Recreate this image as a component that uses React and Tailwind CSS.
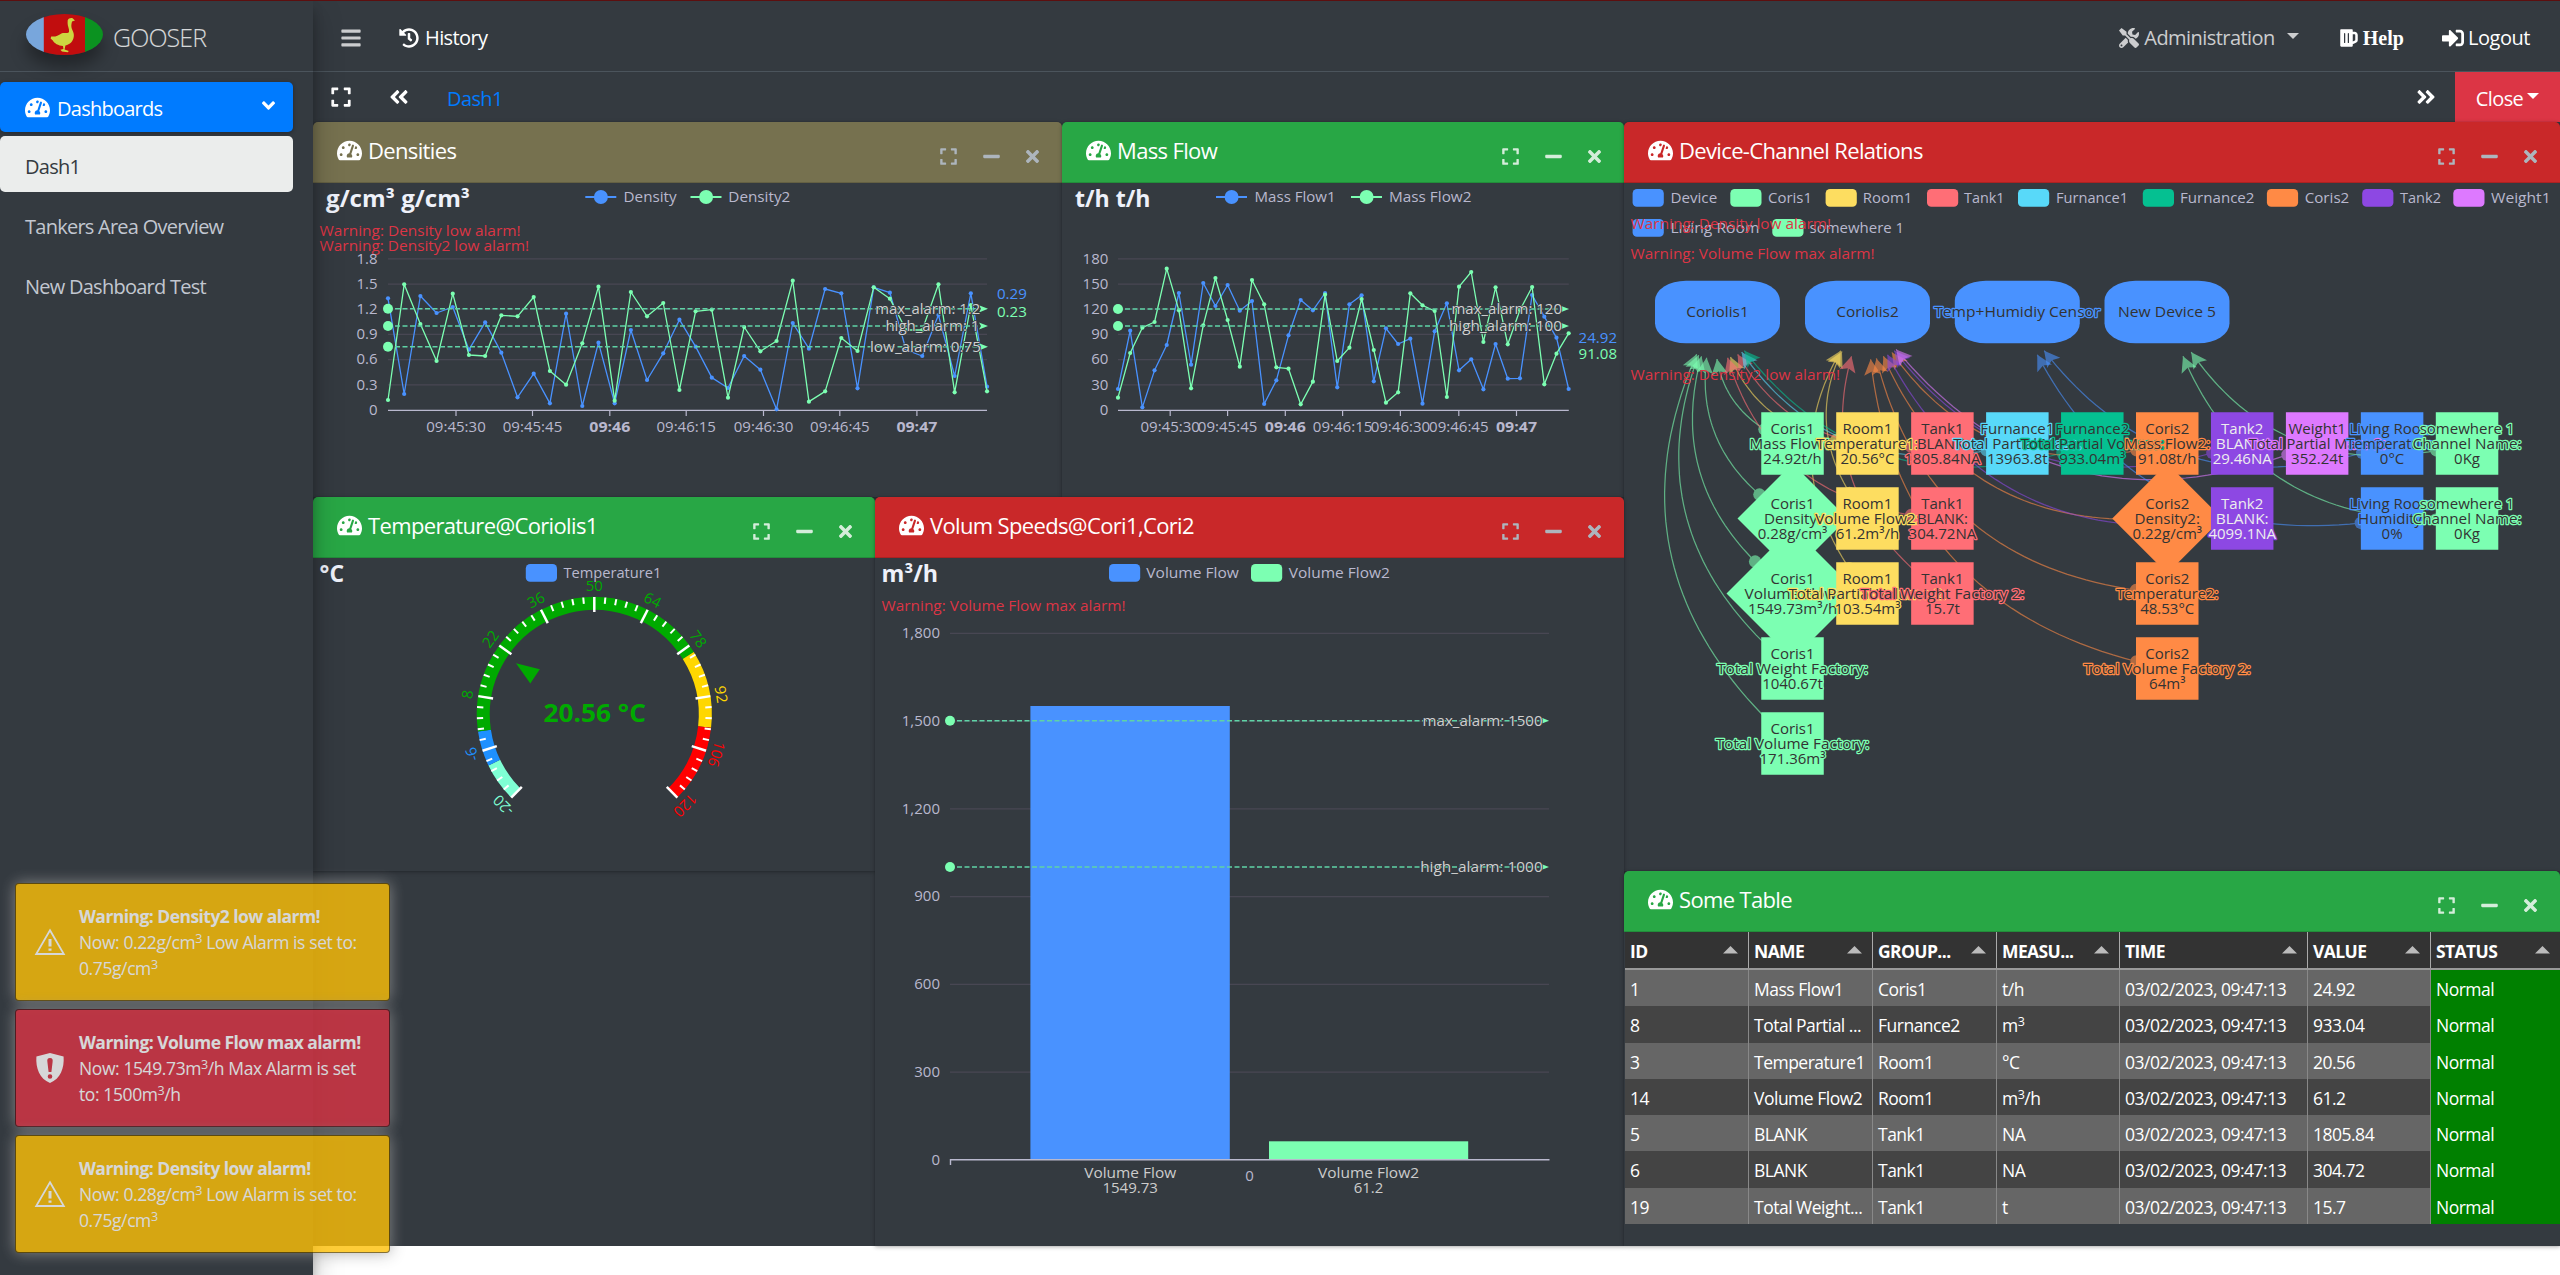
import React from "react";
import {
  FaTachometerAlt, FaHistory, FaTools, FaBeer, FaSignInAlt, FaExpand,
  FaAngleDoubleLeft, FaAngleDoubleRight, FaBars, FaMinus, FaTimes, FaAngleDown,
} from "react-icons/fa";

const MUTED = "#b9b8ce";
const BLUE = "#4992ff";
const GREEN = "#7cffb2";
const GRID = "#484753";

/* ---------- SVG helpers ---------- */

function T({ x, y, w, s = 15, fill = MUTED, bold, anchor = "start", rotate, stroke, sw = 2.5, children }) {
  return (
    <text
      x={x}
      y={y + s * 0.36}
      fontSize={s}
      fill={fill}
      fontWeight={bold ? 700 : 400}
      textAnchor={anchor}
      textLength={w}
      lengthAdjust="spacingAndGlyphs"
      stroke={stroke}
      strokeWidth={stroke ? sw : undefined}
      strokeLinejoin="round"
      paintOrder="stroke"
      transform={rotate ? `rotate(${rotate} ${x} ${y})` : undefined}
    >
      {children}
    </text>
  );
}

function Chart({ box, children }) {
  return (
    <svg
      viewBox={box.join(" ")}
      width={box[2]}
      height={box[3]}
      className="block font-['Open_Sans','Noto_Sans',sans-serif]"
    >
      {children}
    </svg>
  );
}

function LineKey({ x, y, tx, w, color, children }) {
  return (
    <g>
      <line x1={x} x2={x + 31} y1={y} y2={y} stroke={color} strokeWidth="2.2" />
      <circle cx={x + 15.6} cy={y} r="7" fill={color} />
      <T x={tx} y={y - 0.8} w={w}>{children}</T>
    </g>
  );
}

function BoxKey({ x, y, tx, w, color, children }) {
  return (
    <g>
      <rect x={x} y={y - 9} width="31.2" height="17.8" rx="4.4" fill={color} />
      <T x={tx} y={y} w={w}>{children}</T>
    </g>
  );
}

function MarkLine({ x1, x2, y, tx, w, children }) {
  return (
    <g>
      <line x1={x1 + 7} x2={x2 - 9} y1={y} y2={y} stroke="#5fd3a6" strokeWidth="1.5" strokeDasharray="5 2.5" />
      <circle cx={x1} cy={y} r="5" fill={GREEN} />
      <path d={`M${x2} ${y}l-9 -3.6l2 3.6l-2 3.6z`} fill={GREEN} />
      <T x={tx} y={y - 0.6} w={w} fill="#d0d0d0" stroke="#343a40" sw={1.6}>{children}</T>
    </g>
  );
}

function Series({ x0, step, ys, base, color }) {
  const pts = ys.map((v, i) => [x0 + i * step, v / 3 + base]);
  return (
    <g>
      <polyline points={pts.map((p) => p.join(",")).join(" ")} fill="none" stroke={color} strokeWidth="1.3" strokeLinejoin="bevel" />
      {pts.map((p, i) => <circle key={i} cx={p[0]} cy={p[1]} r="2.1" fill={color} />)}
    </g>
  );
}

function Axes({ x1, x2, labelX, rows, ticks, times }) {
  return (
    <g>
      {rows.map(([label, y], i) => (
        <g key={label}>
          {i < rows.length - 1 && <line x1={x1} x2={x2} y1={y} y2={y} stroke={GRID} strokeWidth="1.25" />}
          <T x={labelX} y={y - 0.6} anchor="end">{label}</T>
        </g>
      ))}
      <line x1={x1} x2={x2} y1="410.4" y2="410.4" stroke={MUTED} strokeWidth="1.3" />
      {ticks.map((x, i) => (
        <g key={x}>
          <line x1={x} x2={x} y1="410" y2="416" stroke={MUTED} strokeWidth="1.2" />
          <T x={x} y={426.5} anchor="middle" w={times[i].length > 5 ? 59.5 : 41} bold={times[i].length <= 5}>{times[i]}</T>
        </g>
      ))}
    </g>
  );
}

/* ---------- Charts ---------- */

const TIMES = ["09:45:30", "09:45:45", "09:46", "09:46:15", "09:46:30", "09:46:45", "09:47"];
const yRows = (labels) => labels.map((l, i) => [l, 258.8 + i * 25.22]);

const DENS1 = [385, 672, 378, 429, 411, 539, 457, 548, 682, 611, 700, 431, 708, 518, 700, 480, 630, 550, 449, 530, 623, 654, 558, 599, 718, 459, 536, 357, 370, 655, 352, 368, 540, 558, 435, 618, 370, 650];
const DENS2 = [690, 343, 462, 573, 371, 555, 558, 436, 439, 381, 603, 644, 520, 350, 692, 366, 439, 399, 660, 424, 419, 683, 471, 544, 513, 332, 695, 664, 504, 543, 352, 386, 480, 480, 343, 667, 405, 664];
const MASS1 = [837, 662, 892, 781, 705, 549, 764, 519, 588, 525, 602, 573, 882, 811, 676, 570, 601, 549, 832, 583, 556, 814, 655, 702, 686, 881, 664, 580, 781, 748, 838, 702, 806, 805, 555, 620, 683, 837];
const MASS2 = [863, 729, 653, 636, 476, 601, 835, 646, 504, 630, 770, 510, 583, 772, 776, 883, 815, 554, 753, 713, 567, 720, 878, 847, 550, 586, 603, 861, 530, 486, 696, 532, 703, 600, 531, 823, 731, 670];

function DensityChart() {
  return (
    <Chart box={[313, 183, 749, 313]}>
      <T x={326} y={198.5} s={22.5} w={144} bold fill="#eef1fa">g/cm³ g/cm³</T>
      <LineKey x={585.3} y={197} tx={623.6} w={53} color={BLUE}>Density</LineKey>
      <LineKey x={690.5} y={197} tx={728.3} w={62} color={GREEN}>Density2</LineKey>
      <T x={319.6} y={231} w={201} fill="#dc3545">Warning: Density low alarm!</T>
      <T x={319.6} y={246} w={209.5} fill="#dc3545">Warning: Density2 low alarm!</T>
      <Axes x1={388} x2={987} labelX={377.5} rows={yRows(["1.8", "1.5", "1.2", "0.9", "0.6", "0.3", "0"])}
        ticks={[456, 532.5, 609.8, 686.2, 763.5, 839.8, 916.9]} times={TIMES} />
      <Series x0={388} step={16.19} ys={DENS1} base={170} color={BLUE} />
      <Series x0={388} step={16.19} ys={DENS2} base={170} color={GREEN} />
      <MarkLine x1={388} x2={988} y={308.8} tx={875.2} w={105}>max_alarm: 1.2</MarkLine>
      <MarkLine x1={388} x2={988} y={326} tx={885.4} w={94}>high_alarm: 1</MarkLine>
      <MarkLine x1={388} x2={988} y={346.8} tx={870} w={111}>low_alarm: 0.75</MarkLine>
      <T x={996.9} y={294} w={30} fill={BLUE}>0.29</T>
      <T x={996.9} y={311.2} w={30} fill={GREEN}>0.23</T>
    </Chart>
  );
}

function MassChart() {
  return (
    <Chart box={[1062, 183, 562, 313]}>
      <T x={1075} y={198.5} s={22.5} w={75.5} bold fill="#eef1fa">t/h t/h</T>
      <LineKey x={1216} y={197} tx={1254.6} w={81} color={BLUE}>Mass Flow1</LineKey>
      <LineKey x={1351} y={197} tx={1389} w={82.5} color={GREEN}>Mass Flow2</LineKey>
      <Axes x1={1118} x2={1568.8} labelX={1108.3} rows={yRows(["180", "150", "120", "90", "60", "30", "0"])}
        ticks={[1170.2, 1227.6, 1285.3, 1342.6, 1400.4, 1458.8, 1516.5]} times={TIMES} />
      <Series x0={1118} step={12.18} ys={MASS1} base={110} color={BLUE} />
      <Series x0={1118} step={12.18} ys={MASS2} base={110} color={GREEN} />
      <MarkLine x1={1118} x2={1569} y={309} tx={1451.5} w={110.5}>max_alarm: 120</MarkLine>
      <MarkLine x1={1118} x2={1569} y={326} tx={1449} w={113}>high_alarm: 100</MarkLine>
      <T x={1578.6} y={337.6} w={38.4} fill={BLUE}>24.92</T>
      <T x={1578.6} y={353.6} w={38.4} fill={GREEN}>91.08</T>
    </Chart>
  );
}

const G = { cx: 594.3, cy: 714.5 };
const gAngle = (v) => ((225 - ((v + 20) / 140) * 270) * Math.PI) / 180;
const gPoint = (v, r) => [G.cx + r * Math.cos(gAngle(v)), G.cy - r * Math.sin(gAngle(v))];
const BANDS = [[-20, -10, "#7fffd4"], [-10, -1, "#1e90ff"], [-1, 80, "#00aa00"], [80, 100, "#ffd700"], [100, 120, "#ff0000"]];
const bandColor = (v) => BANDS.find((b) => v < b[1] || b[1] === 120)[2];

function GaugeChart() {
  return (
    <Chart box={[313, 558, 562, 313]}>
      <T x={319.6} y={574} s={22.5} w={24.5} bold fill="#eef1fa">°C</T>
      <BoxKey x={525.8} y={573} tx={563.4} w={98} color={BLUE}>Temperature1</BoxKey>
      {BANDS.map(([a, b, c]) => {
        const [x1, y1] = gPoint(a, 111);
        const [x2, y2] = gPoint(b, 111);
        return <path key={a} d={`M${x1} ${y1}A111 111 0 0 1 ${x2} ${y2}`} fill="none" stroke={c} strokeWidth="13" />;
      })}
      {Array.from({ length: 51 }, (_, i) => {
        const v = -20 + i * 2.8;
        const major = i % 5 === 0;
        const [x1, y1] = gPoint(v, 117.5);
        const [x2, y2] = gPoint(v, major ? 102.5 : 111.2);
        return <line key={i} x1={x1} y1={y1} x2={x2} y2={y2} stroke="#fff" strokeWidth={major ? 2.5 : 2} />;
      })}
      {Array.from({ length: 11 }, (_, i) => {
        const v = -20 + i * 14;
        const [x, y] = gPoint(v, 128.5);
        return <T key={i} x={x} y={y} anchor="middle" fill={bandColor(v)} rotate={-135 + i * 27 || 0.001}>{v}</T>;
      })}
      <path d="M516 663.2L539.8 669.3L530.3 683.4Z" fill="#00aa00" />
      <T x={543.4} y={713.2} s={25} w={102.5} bold fill="#00aa00">20.56 °C</T>
    </Chart>
  );
}

function BarChart() {
  const rows = ["1,800", "1,500", "1,200", "900", "600", "300", "0"];
  return (
    <Chart box={[875, 558, 749, 687]}>
      <T x={881.6} y={574} s={22.5} w={56.5} bold fill="#eef1fa">m³/h</T>
      <BoxKey x={1109} y={573} tx={1146.3} w={92.5} color={BLUE}>Volume Flow</BoxKey>
      <BoxKey x={1251} y={573} tx={1288.8} w={101} color={GREEN}>Volume Flow2</BoxKey>
      <T x={881.6} y={605.8} w={244} fill="#dc3545">Warning: Volume Flow max alarm!</T>
      {rows.map((r, i) => (
        <g key={r}>
          {i < 6 && <line x1="950" x2="1549" y1={633.3 + i * 87.75} y2={633.3 + i * 87.75} stroke={GRID} strokeWidth="1.25" />}
          <T x={940} y={632.8 + i * 87.75} anchor="end">{r}</T>
        </g>
      ))}
      <rect x="1030.4" y="706" width="199.4" height="453.5" fill={BLUE} />
      <rect x="1269" y="1141.3" width="199.2" height="18.2" fill={GREEN} />
      <path d="M950.5 1165V1159.8H1549.5" fill="none" stroke={MUTED} strokeWidth="1.4" />
      <MarkLine x1={950} x2={1549} y={720.7} tx={1422.6} w={120}>max_alarm: 1500</MarkLine>
      <MarkLine x1={950} x2={1549} y={867} tx={1420.2} w={122.5}>high_alarm: 1000</MarkLine>
      <T x={1130.2} y={1172.8} w={92} anchor="middle" fill="#ccc">Volume Flow</T>
      <T x={1130.2} y={1187.8} w={55.5} anchor="middle" fill="#ccc">1549.73</T>
      <T x={1249.5} y={1175.6} anchor="middle">0</T>
      <T x={1368.5} y={1172.8} w={101} anchor="middle" fill="#ccc">Volume Flow2</T>
      <T x={1368.5} y={1187.8} w={29.5} anchor="middle" fill="#ccc">61.2</T>
    </Chart>
  );
}

/* ---------- Relations graph ---------- */

const C = {
  cori1: "#7cffb2", room: "#fddd60", tank1: "#ff6e76", fur1: "#58d9f9", fur2: "#05c091",
  cori2: "#ff8a45", tank2: "#8d48e3", weight: "#dd79ff", living: "#4992ff", some: "#7cffb2",
};
const DEVICES = [
  ["Coriolis1", 1717.5, 62.5], ["Coriolis2", 1867.5, 62.5],
  ["Temp+Humidiy Censor", 2017.3, 166], ["New Device 5", 2167, 98],
].map(([name, x, w]) => ({ name, x, w }));

/* column, row, colour, target device, group, name, name width, value, diamond radius */
const NODES = [
  [0, 0, C.cori1, 0, "Coris1", "Mass Flow1:", 86, "24.92t/h"],
  [0, 1, C.cori1, 0, "Coris1", "Density:", 57, "0.28g/cm³", 55],
  [0, 2, C.cori1, 0, "Coris1", "Volume Flow:", 96, "1549.73m³/h", 66],
  [0, 3, C.cori1, 0, "Coris1", "Total Weight Factory:", 151, "1040.67t"],
  [0, 4, C.cori1, 0, "Coris1", "Total Volume Factory:", 153.5, "171.36m³"],
  [1, 0, C.room, 0, "Room1", "Temperature1:", 102, "20.56°C"],
  [1, 1, C.room, 1, "Room1", "Volume Flow2:", 104.5, "61.2m³/h"],
  [1, 2, C.room, 1, "Room1", "Total Partial Volume 2:", 158, "103.54m³"],
  [2, 0, C.tank1, 0, "Tank1", "BLANK:", 51, "1805.84NA"],
  [2, 1, C.tank1, 0, "Tank1", "BLANK:", 51, "304.72NA"],
  [2, 2, C.tank1, 1, "Tank1", "Total Weight Factory 2:", 164, "15.7t"],
  [3, 0, C.fur1, 0, "Furnance1", "Total Partial Mass:", 128, "13963.8t"],
  [4, 0, C.fur2, 0, "Furnance2", "Total Partial Volume:", 143, "933.04m³"],
  [5, 0, C.cori2, 1, "Coris2", "Mass Flow2:", 86, "91.08t/h"],
  [5, 1, C.cori2, 1, "Coris2", "Density2:", 65.5, "0.22g/cm³", 55],
  [5, 2, C.cori2, 1, "Coris2", "Temperature2:", 102, "48.53°C"],
  [5, 3, C.cori2, 1, "Coris2", "Total Volume Factory 2:", 167, "64m³"],
  [6, 0, C.tank2, 1, "Tank2", "BLANK:", 53, "29.46NA"],
  [6, 1, C.tank2, 1, "Tank2", "BLANK:", 53, "4099.1NA"],
  [7, 0, C.weight, 1, "Weight1", "Total Partial Mass 2:", 137, "352.24t"],
  [8, 0, C.living, 2, "Living Room", "Temperature:", 91, "0°C"],
  [8, 1, C.living, 2, "Living Room", "Humidity:", 68, "0%"],
  [9, 0, C.some, 3, "somewhere 1", "Channel Name:", 109, "0Kg"],
  [9, 1, C.some, 3, "somewhere 1", "Channel Name:", 109, "0Kg"],
].map(([c, r, color, dev, group, name, w, value, d]) => ({
  x: 1792.5 + c * 74.95, y: 443.5 + r * 75, color, dev, group, name, w, value, d,
}));

function edgePath(node) {
  const p0 = [node.x, node.y];
  const p2 = [DEVICES[node.dev].x, 312];
  const k = 0.4;
  const p1 = [
    (p0[0] + p2[0]) / 2 - (p0[1] - p2[1]) * k,
    (p0[1] + p2[1]) / 2 - (p2[0] - p0[0]) * k,
  ];
  const at = (t) => [0, 1].map((i) => (1 - t) ** 2 * p0[i] + 2 * t * (1 - t) * p1[i] + t * t * p2[i]);
  const dist = (a, b) => Math.hypot(a[0] - b[0], a[1] - b[1]);
  const r0 = node.d ? node.d * 0.74 : 31.25;
  let a = 0;
  let b = 1;
  while (dist(at(a), p0) < r0) a += 0.001;
  while (dist(at(b), p2) < 46.9) b -= 0.001;
  const pts = Array.from({ length: 41 }, (_, i) => at(a + ((b - a) * i) / 40));
  const end = at(b);
  const prev = at(b - 0.01);
  const angle = (Math.atan2(end[1] - prev[1], end[0] - prev[0]) * 180) / Math.PI + 90;
  return { d: "M" + pts.map((p) => p.map((n) => n.toFixed(1)).join(" ")).join("L"), start: at(a), end, angle };
}

const KEYS = [
  [1632.6, 198, 1670.4, 46.8, BLUE, "Device"], [1730.3, 198, 1768, 44, C.cori1, "Coris1"],
  [1825.6, 198, 1862.8, 49.5, C.room, "Room1"], [1927, 198, 1964, 40.5, C.tank1, "Tank1"],
  [2018, 198, 2055.9, 72.2, C.fur1, "Furnance1"], [2142.8, 198, 2180, 74.5, C.fur2, "Furnance2"],
  [2266.9, 198, 2304.7, 44.6, C.cori2, "Coris2"], [2362.2, 198, 2400, 41, C.tank2, "Tank2"],
  [2453.3, 198, 2491, 59.6, C.weight, "Weight1"],
  [1632.6, 228, 1670.4, 89, BLUE, "Living Room"], [1772.3, 228, 1809.6, 94.5, C.some, "somewhere 1"],
];

function RelationsChart() {
  return (
    <Chart box={[1624, 183, 936, 688]}>
      {KEYS.map(([x, y, tx, w, color, label]) => (
        <BoxKey key={label} x={x} y={y} tx={tx} w={w} color={color}>{label}</BoxKey>
      ))}
      {NODES.map((n, i) => {
        const e = edgePath(n);
        return (
          <g key={i} opacity="0.6">
            <path d={e.d} fill="none" stroke={n.color} strokeWidth="1.25" />
            <circle cx={e.start[0]} cy={e.start[1]} r="6.2" fill={n.color} />
            <path d="M0 0L8.3 15.6L0 12.3L-8.3 15.6Z" fill={n.color} transform={`translate(${e.end[0]} ${e.end[1]}) rotate(${e.angle})`} />
          </g>
        );
      })}
      {DEVICES.map((d) => (
        <rect key={d.name} x={d.x - 62.5} y="280.7" width="125" height="62.6" rx="31" ry="20" fill={BLUE} />
      ))}
      {NODES.map((n, i) => {
        const r = n.d || 31.25;
        return n.d
          ? <path key={i} d={`M${n.x} ${n.y - r}L${n.x + r} ${n.y}L${n.x} ${n.y + r}L${n.x - r} ${n.y}Z`} fill={n.color} />
          : <rect key={i} x={n.x - r} y={n.y - r} width={62.5} height={62.5} fill={n.color} />;
      })}
      {DEVICES.map((d) => (
        <T key={d.name} x={d.x} y={312} w={d.w} anchor="middle" fill="#333" stroke={BLUE}>{d.name}</T>
      ))}
      {NODES.map((n, i) => {
        const fill = n.color === C.tank2 ? "#eee" : "#333";
        return (
          <g key={i}>
            <T x={n.x} y={n.y - 15.2} anchor="middle" fill={fill} stroke={n.color}>{n.group}</T>
            <T x={n.x} y={n.y} w={n.w} anchor="middle" fill={fill} stroke={n.color}>{n.name}</T>
            <T x={n.x} y={n.y + 15} anchor="middle" fill={fill} stroke={n.color}>{n.value}</T>
          </g>
        );
      })}
      <T x={1630.6} y={223.7} w={200.5} fill="#dc3545">Warning: Density low alarm!</T>
      <T x={1630.6} y={254} w={244} fill="#dc3545">Warning: Volume Flow max alarm!</T>
      <T x={1630.6} y={374.3} w={209.5} fill="#dc3545">Warning: Density2 low alarm!</T>
    </Chart>
  );
}

/* ---------- Table ---------- */

const ROWS = [
  ["1", "Mass Flow1", "Coris1", "t/h", "24.92"],
  ["8", "Total Partial ...", "Furnance2", "m3", "933.04"],
  ["3", "Temperature1", "Room1", "°C", "20.56"],
  ["14", "Volume Flow2", "Room1", "m3/h", "61.2"],
  ["5", "BLANK", "Tank1", "NA", "1805.84"],
  ["6", "BLANK", "Tank1", "NA", "304.72"],
  ["19", "Total Weight...", "Tank1", "t", "15.7"],
];
const HEADS = ["ID", "NAME", "GROUP...", "MEASU...", "TIME", "VALUE", "STATUS"];

const Unit = ({ u }) => {
  const [a, b] = u.split("3");
  return b === undefined ? u : <>{a}<sup className="text-[12.5px] leading-none">3</sup>{b}</>;
};

function DataTable() {
  const cols = "grid grid-cols-[124px_124px_124px_123px_188px_123px_130px]";
  return (
    <div className="pl-px text-[17.5px] tracking-[-0.5px] text-white">
      <div className={`${cols} h-[38px] border-b-2 border-[#999] bg-[#333] font-bold`}>
        {HEADS.map((h) => (
          <div key={h} className="flex items-center justify-between border-r border-[#aaa] pr-2.5 pl-[5px]">
            <span className="pt-[3px] -tracking-[0.6px]">{h}</span>
            <svg width="15" height="8" viewBox="0 0 15 8"><path d="M7.5 0L15 7.5H0Z" fill="#bbb" /></svg>
          </div>
        ))}
      </div>
      {ROWS.map((r, i) => (
        <div key={r[0]} className={`${cols} ${i % 2 ? "bg-[#444]" : "bg-[#666]"} h-[36.3px] leading-[38px] *:h-[36.3px] *:overflow-hidden *:border-r *:border-[#888] *:pl-[5px] *:whitespace-nowrap`}>
          <div>{r[0]}</div>
          <div>{r[1]}</div>
          <div>{r[2]}</div>
          <div><Unit u={r[3]} /></div>
          <div>03/02/2023, 09:47:13</div>
          <div>{r[4]}</div>
          <div className="bg-[#008000]">Normal</div>
        </div>
      ))}
    </div>
  );
}

/* ---------- Layout ---------- */

function Card({ title, tone, className = "", children }) {
  const head = { olive: "bg-[#76714f]", green: "bg-[#28a745]", red: "bg-[#c92829]" }[tone];
  const tools = tone === "green" ? "text-white/80" : "text-[#adb5bd]";
  return (
    <section className={`overflow-hidden rounded-t-[5px] bg-[#343a40] shadow-[0_0_1px_rgba(0,0,0,0.3),0_1px_4px_rgba(0,0,0,0.3)] ${className}`}>
      <header className={`flex h-[61px] items-center justify-between border-b border-black/15 pr-[20px] pl-6 ${head}`}>
        <h3 className="flex items-center gap-[6px] pb-[3px] text-[22px] tracking-[-0.65px] whitespace-nowrap text-white">
          <FaTachometerAlt className="size-[25px]" />{title}
        </h3>
        <div className={`flex items-center gap-[24px] pt-[8px] ${tools}`}>
          <FaExpand className="size-[19px]" />
          <FaMinus className="size-[19px]" />
          <FaTimes className="ml-[-2px] size-[19px]" />
        </div>
      </header>
      {children}
    </section>
  );
}

const Caret = ({ className = "" }) => (
  <svg width="12" height="6" viewBox="0 0 12 6" className={className}><path d="M0 0H12L6 6Z" fill="currentColor" /></svg>
);

function GooseLogo() {
  return (
    <div className="h-[41px] w-[77px] overflow-hidden rounded-[50%] shadow-[0_12px_16px_rgba(0,0,0,0.35)]">
      <svg width="77" height="41" viewBox="0 0 77 41">
        <rect width="18" height="41" fill="#78a6dc" />
        <rect x="17.8" width="42" height="41" fill="#c10d0e" />
        <rect x="59" width="18" height="41" fill="#0b9220" />
        <path fill="#cdd640" d="M41.7 6.2C42.6 3.8 46.6 3.4 47.6 5.2L49 6.6L46 7.4C45.6 9.6 45 11 45.6 14C46.4 17 48.4 19 47.8 22.6C47.2 27.4 44 30.6 39.4 31.6L38.6 35.4L42.8 37L41.8 38.2L36 37.4L34.4 35.8L37.4 35L37 32C32.4 31.6 28 29 26.8 26.4L24.6 24.6L25.2 22.4C29 23.2 32 21.6 35.4 19.4C38.6 18.2 42 20 43 18C43.6 15 41.4 12 41.6 9Z" />
      </svg>
    </div>
  );
}

function Sidebar() {
  return (
    <aside className="relative z-10 h-[1275px] w-[313px] shrink-0 bg-[#343a40] shadow-[0_14px_28px_rgba(0,0,0,0.25),0_10px_10px_rgba(0,0,0,0.22)]">
      <div className="flex h-[72px] items-center gap-[10px] border-b border-[#4b545c] pl-[26px]">
        <div className="mt-[-3px]"><GooseLogo /></div>
        <span className="pt-[5px] text-[25px] font-light tracking-[-0.9px] text-white/80">GOOSER</span>
      </div>
      <nav className="w-[293px] pt-[10px] text-[20px] tracking-[-0.75px]">
        <a className="flex h-[50px] items-center rounded-[5px] bg-[#007bff] pr-[14px] pl-[25px] text-white shadow-[0_1px_4px_rgba(0,0,0,0.3)]">
          <FaTachometerAlt className="size-[25px]" />
          <span className="grow pt-[3px] pl-[7px]">Dashboards</span>
          <FaAngleDown className="mb-[3px] size-[21px]" />
        </a>
        <a className="mt-1 flex h-[56px] items-center rounded-[5px] bg-[#ebedec] pt-[6px] pl-[25px] text-[#343a40]">Dash1</a>
        <a className="mt-1 flex h-[56px] items-center pt-[6px] pl-[25px] text-[#c2c7d0]">Tankers Area Overview</a>
        <a className="mt-1 flex h-[56px] items-center pt-[6px] pl-[25px] text-[#c2c7d0]">New Dashboard Test</a>
      </nav>
    </aside>
  );
}

function TopBar() {
  return (
    <div className="flex h-[72px] items-center border-b border-[#4b545c] bg-[#343a40] pt-[4px] pr-[30px] pl-[27px] text-[20px] tracking-[-0.6px] text-white">
      <FaBars className="size-[22px] text-white/75" />
      <FaHistory className="ml-[37px] size-[20px]" />
      <span className="grow pl-[6px]">History</span>
      <span className="flex items-center text-white/75">
        <FaTools className="size-[20px]" />
        <span className="pl-[5px] tracking-[-0.55px]">Administration</span>
        <Caret className="mb-1 ml-[12px]" />
      </span>
      <FaBeer className="ml-[40px] size-[20px]" />
      <span className="pl-[4px] font-['Liberation_Serif',serif] text-[20px] font-bold tracking-normal">Help</span>
      <FaSignInAlt className="ml-[38px] size-[22px]" />
      <span className="pl-[4px] tracking-[-0.45px]">Logout</span>
    </div>
  );
}

function TabBar() {
  return (
    <div className="flex h-[50px] items-center bg-[#343a40] pl-[17px] text-[20px] tracking-[-0.6px] text-white">
      <FaExpand className="size-[22px]" />
      <FaAngleDoubleLeft className="ml-[36px] size-[22px]" />
      <span className="grow pt-[3px] pl-[37px] text-[#007bff]">Dash1</span>
      <FaAngleDoubleRight className="mr-[18px] size-[22px]" />
      <span className="flex h-full w-[105px] items-center justify-center gap-1 bg-[#dc3545] pt-[3px]">Close<Caret className="mb-[6px]" /></span>
    </div>
  );
}

const WarnIcon = () => (
  <svg width="32" height="28" viewBox="0 0 32 28" fill="none" stroke="#fff" strokeWidth="1.8">
    <path d="M16 2.2L29.8 26H2.2Z" />
    <path d="M16 11V18.4M16 20.4V22.8" strokeWidth="3" />
  </svg>
);
const ShieldIcon = () => (
  <svg width="32" height="32" viewBox="0 0 32 32">
    <path fill="#fff" fillRule="evenodd" d="M16 1L29.6 4.4C30.4 16 26.6 26.4 16 31C5.4 26.4 1.6 16 2.4 4.4ZM16 6C13.6 6 13 7.4 13.4 10L14.6 20H17.4L18.6 10C19 7.4 18.4 6 16 6ZM16 22.2A2.3 2.3 0 1 0 16 26.8A2.3 2.3 0 1 0 16 22.2Z" />
  </svg>
);
const Cube = () => <sup className="text-[12.5px] leading-none">3</sup>;

function Toast({ danger, title, children }) {
  return (
    <div className={`flex h-[118px] w-[375px] items-center rounded-[4px] border border-black/60 pl-[18px] text-white opacity-80 shadow-[0_0_15px_#999] ${danger ? "bg-[#dc3545]" : "bg-[#ffc107]"}`}>
      {danger ? <ShieldIcon /> : <WarnIcon />}
      <div className="pl-[13px] text-[17.5px] leading-[26.2px] tracking-[-0.4px] whitespace-nowrap">
        <div className="font-bold tracking-[-0.55px]">{title}</div>
        {children}
      </div>
    </div>
  );
}

export default function App() {
  return (
    <div className="relative flex h-[1275px] w-[2560px] flex-col overflow-hidden bg-white font-['Open_Sans','Noto_Sans',sans-serif]">
      <div className="flex">
        <Sidebar />
        <main className="w-[2247px]">
          <TopBar />
          <TabBar />
          <div className="grid grid-cols-[562px_187px_562px_936px] grid-rows-[375px_374px_375px] bg-[#343a40]">
            <Card title="Densities" tone="olive" className="col-span-2"><DensityChart /></Card>
            <Card title="Mass Flow" tone="green"><MassChart /></Card>
            <Card title="Device-Channel Relations" tone="red" className="row-span-2"><RelationsChart /></Card>
            <Card title="Temperature@Coriolis1" tone="green"><GaugeChart /></Card>
            <Card title="Volum Speeds@Cori1,Cori2" tone="red" className="col-span-2 row-span-2"><BarChart /></Card>
            <div />
            <Card title="Some Table" tone="green"><DataTable /></Card>
          </div>
        </main>
      </div>
      <div className="absolute top-0 left-0 z-20 h-px w-full bg-[#5c0f0f]" />
      <div className="absolute top-[883px] left-[15px] z-20 flex flex-col gap-2">
        <Toast title="Warning: Density2 low alarm!">
          <div>Now: 0.22g/cm<Cube /> Low Alarm is set to:</div>
          <div>0.75g/cm<Cube /></div>
        </Toast>
        <Toast danger title="Warning: Volume Flow max alarm!">
          <div>Now: 1549.73m<Cube />/h Max Alarm is set</div>
          <div>to: 1500m<Cube />/h</div>
        </Toast>
        <Toast title="Warning: Density low alarm!">
          <div>Now: 0.28g/cm<Cube /> Low Alarm is set to:</div>
          <div>0.75g/cm<Cube /></div>
        </Toast>
      </div>
    </div>
  );
}
